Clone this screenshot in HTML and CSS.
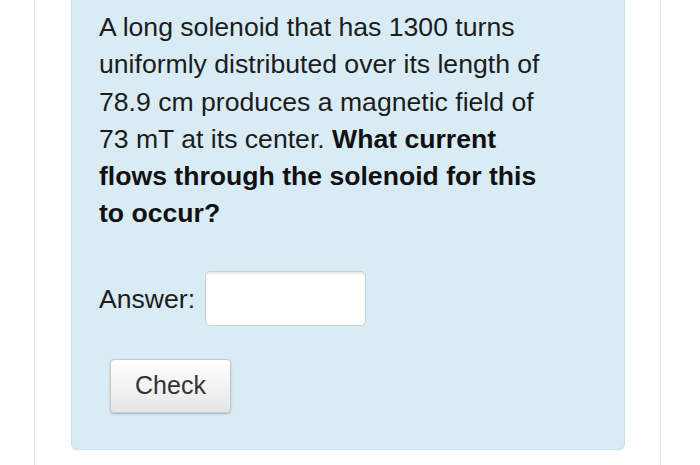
FILE: index.html
```html
<!DOCTYPE html>
<html>
<head>
<meta charset="utf-8">
<link rel="stylesheet" href="styles.css">
</head>
<body>
<div class="page">
  <div class="question">
    <p class="text">A long solenoid that has 1300 turns uniformly distributed over its length of 78.9 cm produces a magnetic field of 73 mT at its center. <strong>What current flows through the solenoid for this to occur?</strong></p>
    <div class="answer-row">
      <label class="answer-label" for="ans">Answer:</label>
      <input class="answer-input" id="ans" type="text">
    </div>
    <button class="check-btn" type="button">Check</button>
  </div>
</div>
</body>
</html>
```
FILE: styles.css
```css
html, body {
  margin: 0;
  padding: 0;
  background: #ffffff;
}
body {
  font-family: "Liberation Sans", Arial, Helvetica, sans-serif;
  color: #1c1c1c;
}
.page {
  margin-left: 34px;
  width: 554px;
  height: 465px;
  border-left: 1px solid #e6e6e6;
  border-right: 1px solid #e6e6e6;
  padding: 0 35px 0 36px;
  box-sizing: content-box;
}
.question {
  background: #d9ecf6;
  border: 1px solid #c4e3ee;
  border-top: none;
  border-radius: 0 0 6px 6px;
  padding: 9px 26px 0 27px;
  height: 450px;
  box-sizing: border-box;
}
.text {
  margin: 0;
  font-size: 26.6px;
  line-height: 37.3px;
  width: 450px;
}
.text strong {
  color: #111;
}
.answer-row {
  display: flex;
  align-items: center;
  margin-top: 38px;
  gap: 10px;
}
.answer-label {
  font-size: 26.6px;
  line-height: 37px;
  margin-top: 2px;
}
.answer-input {
  width: 161px;
  height: 55px;
  box-sizing: border-box;
  border: 1px solid #cfcfcf;
  border-radius: 5px;
  background: #ffffff;
  box-shadow: inset 0 2px 2px rgba(0,0,0,0.08);
  margin: 0;
  padding: 0 8px;
  font-size: 24px;
}
.check-btn {
  display: block;
  margin: 33px 0 0 11px;
  width: 121px;
  height: 54px;
  box-sizing: border-box;
  border: 1px solid #c8c8c8;
  border-radius: 4px;
  background: linear-gradient(#ffffff, #e6e6e6);
  box-shadow: 0 1px 2px rgba(0,0,0,0.25);
  font-family: "Liberation Sans", Arial, Helvetica, sans-serif;
  font-size: 25px;
  color: #333333;
  padding: 0;
}
```
